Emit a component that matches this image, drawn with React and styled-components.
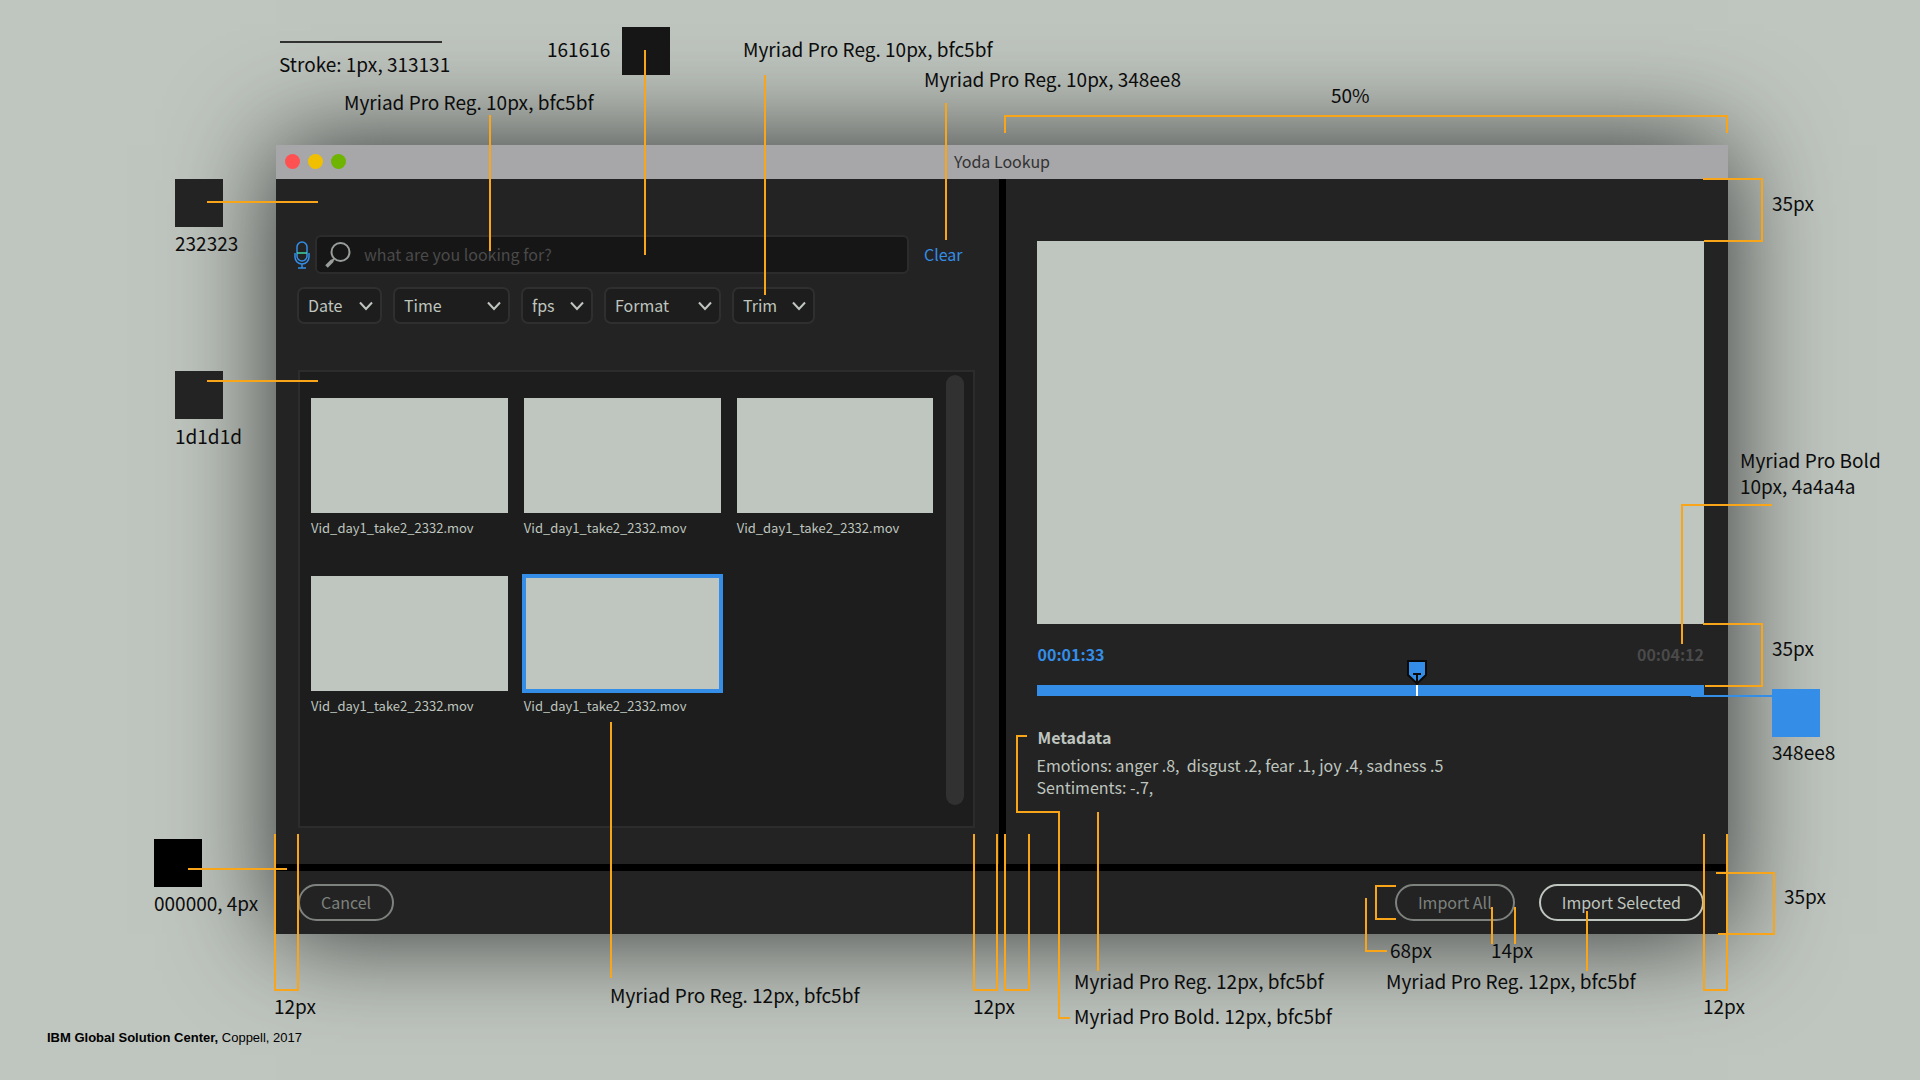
import React, { useState } from "react";
import styled, { createGlobalStyle } from "styled-components";

const GlobalStyle = createGlobalStyle`
    * {
        box-sizing : border-box;
    }
    body {
        margin : 0;
        background-color : #bfc5bf;
    }
    button, input, select {
        font-family : inherit;
        font-size : inherit;
    }
`;
const Board = styled.div`
    position : relative;
    display : flex;
    flex-direction : column;
    min-height : 100vh;
    overflow : hidden;
    font-family : 'Noto Sans CJK SC', 'Noto Sans', sans-serif;
    font-size : 16px;
    color : #bfc5bf;
    background-color : #bfc5bf;
`;
const Window = styled.main`
    margin : 145px 192px 0 276px;
    background-color : #232323;
    box-shadow : 0 0 100px rgba(0, 0, 0, 0.75);
`;
const TitleBar = styled.header`
    display : grid;
    grid-template-columns : 1fr auto 1fr;
    align-items : center;
    height : 34px;
    padding : 0 9px 2px;
    background-color : #a7a7a9;
`;
const Lights = styled.div`
    display : flex;
    gap : 8px;
`;
const Light = styled.span`
    width : 15px;
    height : 15px;
    border-radius : 50%;
    background-color : ${({ $color }) => $color};
`;
const Title = styled.h1`
    margin : 0;
    font-size : 16px;
    font-weight : 400;
    line-height : 24px;
    color : #333333;
`;
const Panes = styled.div`
    display : grid;
    grid-template-columns : 1fr 1fr;
    gap : 7px;
    background-color : #000000;
    border-bottom : 7px solid #000000;
`;
const BrowsePane = styled.section`
    display : flex;
    flex-direction : column;
    padding : 56px 24px 36px 22px;
    background-color : #232323;
`;
const SearchRow = styled.form`
    display : flex;
    align-items : center;
    margin : 0 12px 13px -4px;
`;
const MicButton = styled.button`
    display : flex;
    padding : 0;
    margin-right : 5px;
    border : none;
    background : none;
`;
const SearchBox = styled.label`
    display : flex;
    flex : 1;
    align-items : center;
    gap : 13px;
    height : 39px;
    padding : 0 8px;
    border : 2px solid #2c2c2c;
    border-radius : 6px;
    background-color : #161616;
`;
const SearchInput = styled.input`
    flex : 1;
    min-width : 0;
    padding : 0 0 2px;
    border : none;
    outline : none;
    background : none;
    color : #bfc5bf;
    &::placeholder {
        color : #4a4a4a;
        opacity : 1;
    }
`;
const ClearButton = styled.button`
    margin-left : 15px;
    padding : 0 0 2px;
    border : none;
    background : none;
    color : #348ee8;
`;
const FilterRow = styled.div`
    display : flex;
    gap : 11px;
    margin : 0 0 46px -1px;
`;
const FilterBox = styled.div`
    position : relative;
    width : ${({ $width }) => $width}px;
`;
const FilterSelect = styled.select`
    appearance : none;
    display : block;
    width : 100%;
    height : 37px;
    padding : 0 24px 2px 9px;
    border : 2px solid #2f2f2f;
    border-radius : 7px;
    background-color : #1d1d1d;
    color : #bfc5bf;
`;
const Chevron = styled.svg`
    position : absolute;
    right : 9px;
    top : 14px;
    pointer-events : none;
`;
const ClipPanel = styled.div`
    display : flex;
    flex : 1;
    align-items : stretch;
    gap : 12px;
    padding : 3px 9px 21px 11px;
    border : 2px solid #2c2c2c;
    background-color : #1d1d1d;
`;
const ClipGrid = styled.div`
    display : grid;
    flex : 1;
    grid-template-columns : repeat(3, 1fr);
    align-content : start;
    gap : 37px 16px;
    padding-top : 23px;
`;
const Clip = styled.button`
    display : flex;
    flex-direction : column;
    gap : 4px;
    padding : 0;
    border : none;
    background : none;
    color : #bfc5bf;
    font-size : 13px;
    line-height : 22px;
    text-align : left;
`;
const ClipThumb = styled.span`
    width : 100%;
    aspect-ratio : 197 / 115;
    background-color : #bfc5bf;
    outline : ${({ $selected }) => ($selected ? "4px solid #348ee8" : "none")};
    outline-offset : -2px;
`;
const ScrollThumb = styled.div`
    width : 18px;
    border-radius : 9px;
    background-color : #313131;
`;
const PreviewPane = styled.section`
    padding : 62px 24px 66px 31px;
    background-color : #232323;
`;
const Preview = styled.div`
    aspect-ratio : 668 / 383;
    background-color : #bfc5bf;
`;
const TimeRow = styled.div`
    display : flex;
    justify-content : space-between;
    padding : 18px 0 19px 1px;
    font-weight : 700;
    line-height : 24px;
`;
const Time = styled.span`
    color : ${({ $total }) => ($total ? "#4a4a4a" : "#348ee8")};
`;
const Scrubber = styled.div`
    position : relative;
    height : 11px;
`;
const ScrubInput = styled.input`
    appearance : none;
    display : block;
    width : 100%;
    height : 11px;
    margin : 0;
    border-radius : 0;
    background-color : #348ee8;
    &::-webkit-slider-thumb {
        appearance : none;
        width : 2px;
        height : 11px;
        border-radius : 0;
        background-color : #ffffff;
    }
`;
const Marker = styled.svg`
    position : absolute;
    bottom : 11px;
    margin-left : -10px;
    pointer-events : none;
`;
const MetaTitle = styled.h2`
    margin : 29px 0 5px 1px;
    font-size : 16px;
    font-weight : 700;
    line-height : 24px;
`;
const MetaText = styled.p`
    margin : 0;
    line-height : 22px;
    white-space : pre-wrap;
`;
const Actions = styled.footer`
    display : flex;
    align-items : center;
    gap : 24px;
    height : 63px;
    padding : 0 24px 0 22px;
`;
const PillButton = styled.button`
    height : 37px;
    padding : 0 21px;
    border : 2px solid ${({ $strong }) => ($strong ? "#bfc5bf" : "#7d827e")};
    border-radius : 19px;
    margin-right : ${({ $first }) => ($first ? "auto" : "0")};
    background : none;
    color : ${({ $strong }) => ($strong ? "#bfc5bf" : "#7d827e")};
`;
const Credit = styled.p`
    margin : 94px 47px 0;
    font-family : 'Liberation Sans', Arial, sans-serif;
    font-size : 13px;
    line-height : 20px;
    color : #000000;
`;
// 주석 레이어 : 왼쪽, 가운데, 오른쪽 기준점
const Layer = styled.div`
    position : absolute;
    top : 0;
    width : 0;
    pointer-events : none;
    ${({ $anchor }) => $anchor === "left" && "left : 0;"}
    ${({ $anchor }) => $anchor === "center" && "left : calc(50% + 42px);"}
    ${({ $anchor }) => $anchor === "right" && "right : 192px;"}
`;
const Lines = styled.svg`
    position : absolute;
    left : 0;
    top : 0;
    width : 1px;
    height : 1px;
    overflow : visible;
    fill : none;
    stroke : #f9a51a;
    stroke-width : 2px;
`;
const Note = styled.span`
    position : absolute;
    left : ${({ $x }) => $x}px;
    top : ${({ $y }) => $y}px;
    font-size : 19px;
    line-height : 26px;
    white-space : pre;
    color : #0c0c0c;
`;
const Swatch = styled.span`
    position : absolute;
    left : ${({ $x }) => $x}px;
    top : ${({ $y }) => $y}px;
    width : 48px;
    height : 48px;
    background-color : ${({ $color }) => $color};
`;

const filters = [
    { name: "Date", width: 85 },
    { name: "Time", width: 117 },
    { name: "fps", width: 72 },
    { name: "Format", width: 117 },
    { name: "Trim", width: 83 },
];

const clips = [1, 2, 3, 4, 5].map((id) => ({ id, name: "Vid_day1_take2_2332.mov" }));

const layers = [
    {
        anchor: "left",
        swatches: [
            [622, 27, "#161616"],
            [175, 179, "#232323"],
            [175, 371, "#232323"],
            [154, 839, "#000000"],
        ],
        lines: [
            "M207 202H318",
            "M207 381H318",
            "M188 869H287",
            "M490 115V251",
            "M645 50V255",
            "M765 75V295",
            "M611 722V978",
            "M275 834V990H298V834",
        ],
        notes: [
            [279, 51, "Stroke: 1px, 313131"],
            [547, 36, "161616"],
            [344, 89, "Myriad Pro Reg. 10px, bfc5bf"],
            [743, 36, "Myriad Pro Reg. 10px, bfc5bf"],
            [175, 230, "232323"],
            [175, 423, "1d1d1d"],
            [154, 890, "000000, 4px"],
            [274, 993, "12px"],
            [610, 982, "Myriad Pro Reg. 12px, bfc5bf"],
        ],
    },
    {
        anchor: "center",
        swatches: [],
        lines: [
            "M-56 103V240",
            "M-28 834V990H-5V834",
            "M3 834V990H27V834",
            "M25 736H15V812H57V1018H68",
            "M96 812V971",
        ],
        notes: [
            [-78, 66, "Myriad Pro Reg. 10px, 348ee8"],
            [-29, 993, "12px"],
            [72, 968, "Myriad Pro Reg. 12px, bfc5bf"],
            [72, 1003, "Myriad Pro Bold. 12px, bfc5bf"],
        ],
    },
    {
        anchor: "right",
        swatches: [[44, 689, "#348ee8"]],
        lines: [
            "M-723 133V116H-1V133",
            "M-25 179H34V241H-24",
            "M-25 624H34V686H-23",
            "M-12 873H46V934H-10",
            "M44 505H-46V644",
            "M-24 834V990H-1V834",
            "M-332 886H-352V919H-332",
            "M-362 898V951H-341",
            "M-236 907V944",
            "M-213 907V944",
            "M-141 911V971",
        ],
        notes: [
            [-397, 82, "50%"],
            [44, 190, "35px"],
            [12, 447, "Myriad Pro Bold\n10px, 4a4a4a"],
            [44, 635, "35px"],
            [44, 739, "348ee8"],
            [56, 883, "35px"],
            [-338, 937, "68px"],
            [-237, 937, "14px"],
            [-342, 968, "Myriad Pro Reg. 12px, bfc5bf"],
            [-25, 993, "12px"],
        ],
    },
];

function MicIcon() {
    return (
        <svg width="16" height="28" viewBox="0 0 16 28" fill="none" stroke="#348ee8" strokeWidth="1.5" aria-hidden="true">
            <rect x="3" y="1" width="10" height="19" rx="5" />
            <path d="M1 12v4a7 7 0 0 0 14 0v-4M8 23v4M4 27h8" />
            <path d="M3 12h10" stroke="#3fd6a0" />
        </svg>
    );
}

function SearchIcon() {
    return (
        <svg width="26" height="26" viewBox="0 0 26 26" fill="none" stroke="#9a9e9a" aria-hidden="true">
            <circle cx="15.5" cy="10" r="9" strokeWidth="2" />
            <path d="M9 17l-2.5 2.5" strokeWidth="2" />
            <path d="M7.5 18.5L1.5 24.5" strokeWidth="3.5" />
        </svg>
    );
}

function Filter({ name, width }) {
    return (
        <FilterBox $width={width}>
            <FilterSelect aria-label={name} defaultValue={name}>
                <option>{name}</option>
            </FilterSelect>
            <Chevron width="14" height="10" viewBox="0 0 14 10" fill="none" stroke="#bfc5bf" strokeWidth="2" aria-hidden="true">
                <path d="M1 1.5l6 6.5 6-6.5" />
            </Chevron>
        </FilterBox>
    );
}

export default function App() {
    const [query, setQuery] = useState("");
    const [selected, setSelected] = useState(5);
    const [position, setPosition] = useState(570);

    return (
        <Board>
            <GlobalStyle />
            <Window>
                <TitleBar>
                    <Lights>
                        <Light $color="#ff5152" />
                        <Light $color="#f0c000" />
                        <Light $color="#6eb400" />
                    </Lights>
                    <Title>Yoda Lookup</Title>
                </TitleBar>
                <Panes>
                    <BrowsePane>
                        <SearchRow onSubmit={(e) => e.preventDefault()}>
                            <MicButton type="button" aria-label="Voice search">
                                <MicIcon />
                            </MicButton>
                            <SearchBox>
                                <SearchIcon />
                                <SearchInput
                                    aria-label="Search"
                                    placeholder="what are you looking for?"
                                    value={query}
                                    onChange={(e) => setQuery(e.target.value)}
                                />
                            </SearchBox>
                            <ClearButton type="button" onClick={() => setQuery("")}>Clear</ClearButton>
                        </SearchRow>
                        <FilterRow>
                            {filters.map((filter) => (
                                <Filter key={filter.name} {...filter} />
                            ))}
                        </FilterRow>
                        <ClipPanel>
                            <ClipGrid>
                                {clips.map((clip) => (
                                    <Clip key={clip.id} type="button" aria-pressed={clip.id === selected} onClick={() => setSelected(clip.id)}>
                                        <ClipThumb $selected={clip.id === selected} />
                                        {clip.name}
                                    </Clip>
                                ))}
                            </ClipGrid>
                            <ScrollThumb />
                        </ClipPanel>
                    </BrowsePane>
                    <PreviewPane>
                        <Preview />
                        <TimeRow>
                            <Time>00:01:33</Time>
                            <Time $total>00:04:12</Time>
                        </TimeRow>
                        <Scrubber>
                            <ScrubInput
                                type="range"
                                aria-label="Position"
                                min="0"
                                max="1000"
                                value={position}
                                onChange={(e) => setPosition(Number(e.target.value))}
                            />
                            <Marker style={{ left: `${position / 10}%` }} width="20" height="25" viewBox="0 0 20 25" aria-hidden="true">
                                <path d="M1 1h18v14l-9 8.5L1 15z" fill="#348ee8" stroke="#0a0a0a" strokeWidth="2" />
                                <path d="M6 14h8M10 14v11" stroke="#0a0a0a" strokeWidth="2" />
                            </Marker>
                        </Scrubber>
                        <MetaTitle>Metadata</MetaTitle>
                        <MetaText>Emotions: anger .8,{"  "}disgust .2, fear .1, joy .4, sadness .5</MetaText>
                        <MetaText>Sentiments: -.7,</MetaText>
                    </PreviewPane>
                </Panes>
                <Actions>
                    <PillButton type="button" $first>Cancel</PillButton>
                    <PillButton type="button">Import All</PillButton>
                    <PillButton type="button" $strong>Import Selected</PillButton>
                </Actions>
            </Window>
            <Credit><b>IBM Global Solution Center,</b> Coppell, 2017</Credit>
            {layers.map(({ anchor, swatches, lines, notes }) => (
                <Layer key={anchor} $anchor={anchor}>
                    {swatches.map(([x, y, color]) => (
                        <Swatch key={`${x}-${y}`} $x={x} $y={y} $color={color} />
                    ))}
                    <Lines aria-hidden="true">
                        {lines.map((d) => <path key={d} d={d} />)}
                        {anchor === "left" && <path d="M280 42H442" stroke="#313131" />}
                        {anchor === "right" && <path d="M-37 696H44" stroke="#348ee8" />}
                    </Lines>
                    {notes.map(([x, y, text]) => (
                        <Note key={`${x}-${y}`} $x={x} $y={y}>{text}</Note>
                    ))}
                </Layer>
            ))}
        </Board>
    );
}
